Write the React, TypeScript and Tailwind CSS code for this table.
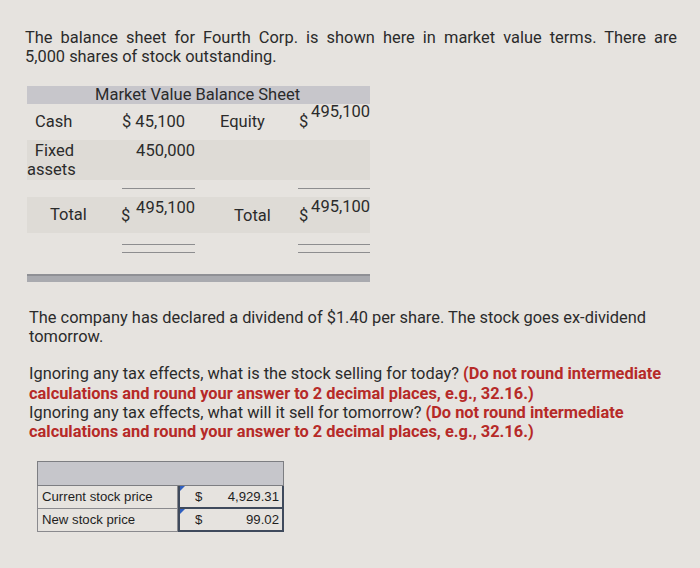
import React from "react";

const font = { fontFamily: "Roboto, 'Open Sans', sans-serif" };

function Lines({ double }: { double?: boolean }) {
  return (
    <div className="flex flex-col gap-[7px]">
      <div className="h-px bg-[#8d8d8f]" />
      {double && <div className="h-px bg-[#8d8d8f]" />}
    </div>
  );
}

function BalanceSheet() {
  return (
    <div className="ml-[2px] mt-[20px] w-[343px] text-[16.5px] text-[#2b2b2b]">
      <div className="flex h-[18px] items-center bg-[#c7c6cb] pl-[68px] leading-none">
        Market Value Balance Sheet
      </div>
      {/* cash row */}
      <div className="flex h-[36px] items-center">
        <div className="w-[88px] pl-[8px] pt-[1px]">Cash</div>
        <div className="w-[80px] pl-[7px] pt-[1px]">$ 45,100</div>
        <div className="w-[103px] pl-[25px] pt-[1px]">Equity</div>
        <div className="relative w-[72px] pt-[1px]">
          <span className="pl-[1px]">$</span>
          <span className="absolute right-0 top-[-9px]">495,100</span>
        </div>
      </div>
      {/* fixed assets row */}
      <div className="flex h-[40px] bg-[#dedbd6] leading-[19px]">
        <div className="w-[88px] pr-[41px] pt-[1px] text-right">
          Fixed
          <br />
          assets
        </div>
        <div className="w-[80px] pt-[1px] text-right">450,000</div>
      </div>
      {/* single underline */}
      <div className="flex h-[17px] items-center">
        <div className="ml-[95px] w-[73px]">
          <Lines />
        </div>
        <div className="ml-[103px] w-[72px]">
          <Lines />
        </div>
      </div>
      {/* total row */}
      <div className="flex h-[36px] items-center bg-[#dedbd6]">
        <div className="w-[88px] pl-[23px] pt-[1px]">Total</div>
        <div className="relative w-[80px] pl-[6px] pt-[2px]">
          $<span className="absolute right-0 top-[-6px]">495,100</span>
        </div>
        <div className="w-[103px] pl-[39px] pt-[3px]">Total</div>
        <div className="relative w-[72px] pl-[1px] pt-[3px]">
          $<span className="absolute right-0 top-[-6px]">495,100</span>
        </div>
      </div>
      {/* double underline */}
      <div className="flex h-[39px] items-start pt-[11px]">
        <div className="ml-[95px] w-[73px]">
          <Lines double />
        </div>
        <div className="ml-[103px] w-[72px]">
          <Lines double />
        </div>
      </div>
      <div className="mt-[2px] h-[8px] border-t-2 border-[#8f9095] bg-[#a9aaaf]" />
    </div>
  );
}

function AnswerTable() {
  return (
    <div
      className="ml-[12px] mt-[20px] w-[247px] text-[13.2px] text-[#1e1e1e]"
      style={{ fontFamily: "'Liberation Sans', Arial, sans-serif" }}
    >
      <div className="h-[25px] border border-[#7d7e82] bg-[#c6c6cb]" />
      {[
        ["Current stock price", "4,929.31"],
        ["New stock price", "99.02"],
      ].map(([label, val]) => (
        <div key={label} className="flex h-[23px]">
          <div className="flex w-[141px] items-center border border-t-0 border-[#8a8a8e] pl-[4px]">
            {label}
          </div>
          <div className="relative flex w-[106px] items-center justify-between border-2 border-t-0 border-[#3f4a5c] pl-[15px] pr-[3px]">
            <span className="absolute left-0 top-0 h-0 w-0 border-b-[5px] border-l-[5px] border-b-transparent border-l-[#2f5fbf]" />
            <span>$</span>
            <span>{val}</span>
          </div>
        </div>
      ))}
    </div>
  );
}

export default function App() {
  return (
    <div
      className="h-[568px] w-[700px] overflow-hidden bg-[#e6e3df] px-[25px] pt-[28px]"
      style={font}
    >
      <p className="w-[652px] text-[16.4px] leading-[19px] text-[#2b2b2b]">
        <span className="block [text-align-last:justify]">
          The balance sheet for Fourth Corp. is shown here in market value terms. There are
        </span>
        <span className="block">5,000 shares of stock outstanding.</span>
      </p>
      <BalanceSheet />
      <div className="ml-[4px] mt-[27px] w-[650px] text-[16.4px] leading-[18.7px] text-[#2b2b2b]">
        <p>
          The company has declared a dividend of $1.40 per share. The stock goes ex-dividend
          tomorrow.
        </p>
        <div className="mt-[18px] leading-[19.2px]">
          <p>
            Ignoring any tax effects, what is the stock selling for today?{" "}
            <b className="font-bold text-[#b62a28]">
              (Do not round intermediate calculations and round your answer to 2 decimal
              places, e.g., 32.16.)
            </b>
          </p>
          <p>
            Ignoring any tax effects, what will it sell for tomorrow?{" "}
            <b className="font-bold text-[#b62a28]">
              (Do not round intermediate calculations and round your answer to 2 decimal
              places, e.g., 32.16.)
            </b>
          </p>
        </div>
      </div>
      <AnswerTable />
    </div>
  );
}
